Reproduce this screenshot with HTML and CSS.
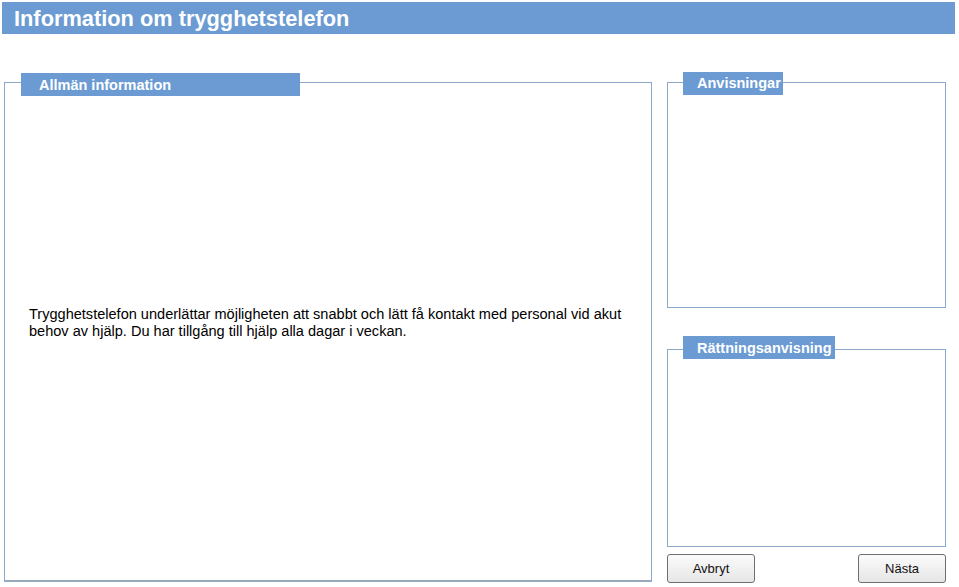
FILE: index.html
```html
<!DOCTYPE html>
<html lang="sv">
<head>
<meta charset="utf-8">
<title>Information om trygghetstelefon</title>
<link rel="stylesheet" href="styles.css">
</head>
<body>
<div class="header"><h1 class="title">Information om trygghetstelefon</h1></div>
<div class="main">
  <div class="box box-left">
    <div class="legend legend-left">Allmän information</div>
    <p class="info">Trygghetstelefon underlättar möjligheten att snabbt och lätt få kontakt med personal vid akut behov av hjälp. Du har tillgång till hjälp alla dagar i veckan.</p>
  </div>
  <div class="side">
    <div class="box box-top">
      <div class="legend legend-small">Anvisningar</div>
    </div>
    <div class="box box-bottom">
      <div class="legend legend-wide">Rättningsanvisning</div>
    </div>
    <div class="buttons">
      <button class="btn">Avbryt</button>
      <button class="btn">Nästa</button>
    </div>
  </div>
</div>
</body>
</html>
```
FILE: styles.css
```css
html, body {
  margin: 0;
  padding: 0;
  background: #ffffff;
  font-family: "Liberation Sans", Arial, sans-serif;
}
.header {
  margin: 2px 4px 0 2px;
  height: 32px;
  background: #6b9bd2;
  display: flex;
  align-items: center;
}
.title {
  margin: 0 0 0 12px;
  color: #ffffff;
  font-size: 21.8px;
  font-weight: bold;
  line-height: 29px;
}
.main {
  display: flex;
  margin-top: 48px;
  padding-left: 4px;
}
.box {
  border: 1px solid #8ba7ca;
  box-sizing: border-box;
}
.box-left {
  width: 648px;
  height: 500px;
  border-bottom: 2px solid #9aaabd;
}
.legend {
  background: #6b9bd2;
  color: #ffffff;
  font-weight: bold;
  font-size: 14.5px;
  height: 23px;
  line-height: 25px;
  box-sizing: border-box;
}
.legend-left {
  margin: -10px 0 0 16px;
  width: 279px;
  padding-left: 18px;
}
.info {
  margin: 210px 8px 0 24px;
  font-size: 14.55px;
  line-height: 17px;
  color: #000000;
}
.side {
  margin-left: 15px;
  width: 279px;
  display: flex;
  flex-direction: column;
}
.box-top {
  height: 226px;
}
.legend-small {
  margin: -11px 0 0 15px;
  width: 100px;
  padding-left: 14px;
  line-height: 23px;
}
.box-bottom {
  margin-top: 41px;
  height: 198px;
}
.legend-wide {
  margin: -14px 0 0 15px;
  width: 152px;
  padding-left: 14px;
}
.buttons {
  display: flex;
  justify-content: space-between;
  margin-top: 7px;
}
.btn {
  width: 88px;
  height: 29px;
  border: 1px solid #6f6f6f;
  border-radius: 3px;
  background: linear-gradient(#fbfbfb, #e6e6e6);
  font-family: "Liberation Sans", Arial, sans-serif;
  font-size: 13px;
  color: #111111;
  padding: 0;
}
```
